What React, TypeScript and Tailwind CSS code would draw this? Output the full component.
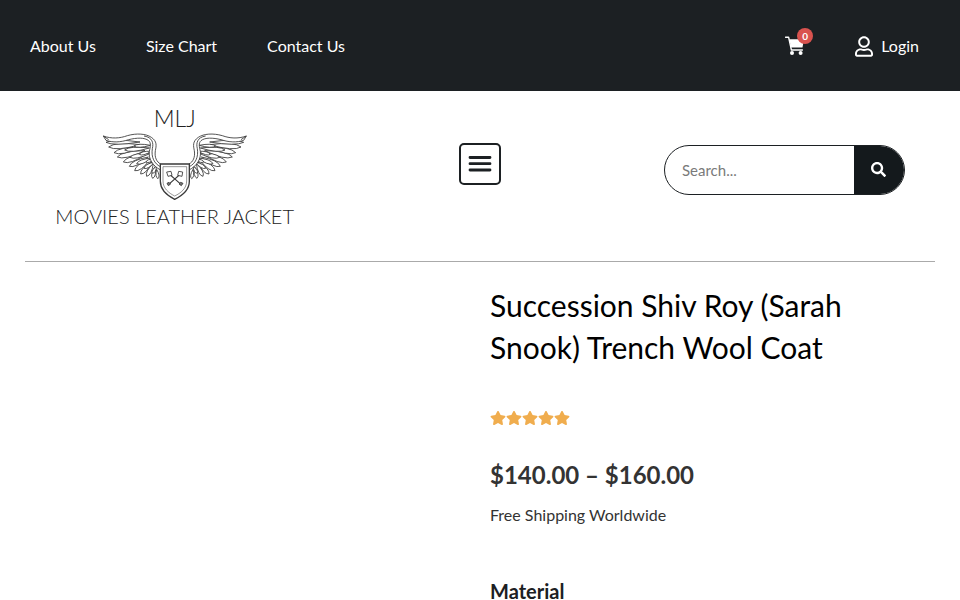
import { FaRegUser, FaSearch, FaStar } from "react-icons/fa";

const links = ["About Us", "Size Chart", "Contact Us"];

// root x, root y, tip x, tip y, half width
const feathers = [
  // long outer row
  [350, 222, 354, 250, 9],
  [345, 214, 338, 249, 11],
  [340, 205, 320, 243, 12],
  [335, 200, 302, 236, 13],
  [330, 193, 284, 226, 14],
  [325, 185, 268, 213, 14],
  [320, 176, 250, 200, 15],
  [315, 166, 232, 185, 15],
  [305, 156, 222, 172, 15],
  [300, 148, 206, 155, 15],
  [300, 140, 198, 141, 12],
  // middle row
  [350, 212, 337, 234, 9],
  [344, 200, 312, 219, 10],
  [337, 188, 290, 205, 11],
  [332, 174, 270, 186, 12],
  [328, 158, 254, 164, 12],
  // short row by the band
  [342, 192, 318, 200, 8],
  [334, 168, 298, 177, 9],
  [332, 150, 282, 152, 9],
];

function featherPath([rx, ry, tx, ty, w]: number[]) {
  const len = Math.hypot(tx - rx, ty - ry);
  const nx = (-(ty - ry) / len) * w;
  const ny = ((tx - rx) / len) * w;
  const ax = rx + (tx - rx) * 0.78;
  const ay = ry + (ty - ry) * 0.78;
  return `M${rx} ${ry}Q${ax + nx} ${ay + ny} ${tx} ${ty}Q${ax - nx} ${ay - ny} ${rx} ${ry}`;
}

function Wing() {
  return (
    <g strokeLinejoin="round">
      {feathers.map((f) => (
        <path key={f.join()} d={featherPath(f)} fill="white" />
      ))}
      {/* leading edge and the band under it */}
      <path
        fill="white"
        d="M190 122C215 131 240 129 262 121C290 113 318 115 334 126C352 138 349 152 346 166C343 186 350 200 362 206V224C338 212 325 190 328 168C331 155 334 143 326 136C314 126 290 127 266 133C242 141 218 142 198 135Z"
      />
      <path d="M312 122C338 126 341 144 337 160C333 186 343 205 361 214M190 122L206 133" />
    </g>
  );
}

function Crest() {
  return (
    <svg width="144" height="67" viewBox="189 113 432 201" fill="none" stroke="#3a3a3a" strokeWidth="2.6" aria-hidden="true">
      <Wing />
      <g transform="translate(809 0) scale(-1 1)">
        <Wing />
      </g>
      <path d="M361 206H448V258C448 284 427 301 404 312C382 301 361 284 361 258Z" fill="white" strokeWidth="4" />
      <path d="M369 214H440V257C440 279 423 293 404 302C386 293 369 279 369 257Z" strokeWidth="1.6" />
      {/* crossed keys */}
      <path d="M391 239L423 267M418 239L386 267" strokeWidth="3.2" />
      <path d="M380 230L393 228L396 240L384 243ZM416 228L428 230L426 243L413 240Z" fill="white" />
      <path d="M381 264L387 261L392 266L385 271ZM422 261L429 264L424 271L417 266Z" fill="#777" />
    </svg>
  );
}

function CartIcon() {
  return (
    <svg width="20" height="20" viewBox="0 0 20 20" fill="none" aria-hidden="true">
      <path d="M0.5 1.2H3.6L6.4 14H17.4" stroke="white" strokeWidth="1.4" strokeLinejoin="round" strokeLinecap="round" />
      <path d="M4.3 3.2H19L17.5 11.6H6.2Z" fill="white" />
      <circle cx="7" cy="17" r="2" fill="white" />
      <circle cx="15.6" cy="17" r="2" fill="white" />
    </svg>
  );
}

export default function App() {
  return (
    <div className="bg-white font-['Lato',sans-serif] text-base text-[#333]">
      <header className="flex h-[91px] items-center justify-between bg-[#1c2023] pt-px pr-[41px] pl-[30px] text-white">
        <nav className="flex gap-[50px]">
          {links.map((label) => (
            <a key={label} href="#">
              {label}
            </a>
          ))}
        </nav>
        <div className="flex items-center gap-[50px]">
          <button className="relative" aria-label="Cart">
            <CartIcon />
            <span className="absolute -top-2 -right-2 flex size-4 items-center justify-center rounded-full bg-[#d9534f] text-[10px] leading-4 font-bold">
              0
            </span>
          </button>
          <a href="#" className="flex items-center gap-2">
            <FaRegUser className="h-[21px] w-[18px]" />
            Login
          </a>
        </div>
      </header>

      <div className="mx-[25px] grid h-[171px] grid-cols-3 border-b border-[#aaa]">
        <a href="#" className="flex flex-col items-center pt-[15px] pr-1 font-light whitespace-nowrap text-[#222]">
          <span className="text-[23px] leading-6">MLJ</span>
          <span className="mt-[3px]">
            <Crest />
          </span>
          <span className="mt-1 text-xl leading-6">MOVIES LEATHER JACKET</span>
        </a>
        <div className="flex justify-center pt-[52px]">
          <button
            aria-label="Menu"
            className="flex size-[42px] items-center justify-center rounded-[5px] border-2 border-[#1c2023]"
          >
            <svg width="24" height="18" viewBox="0 0 24 18" stroke="#1c2023" strokeWidth="2.8" strokeLinecap="round">
              <path d="M2 2.5H22M2 8.7H22M2 15H22" />
            </svg>
          </button>
        </div>
        <div className="flex justify-end pt-[54px] pr-[30px]">
          <form className="flex h-[50px] w-[241px] overflow-hidden rounded-full border border-[#1c2023]">
            <input
              type="search"
              aria-label="Search"
              placeholder="Search..."
              className="min-w-0 flex-1 pl-[17px] text-[15px] outline-none placeholder:text-[#7a7a7a]"
            />
            <button type="button" aria-label="Search" className="flex w-[50px] items-center justify-center bg-[#14191c] pr-0.5 pb-px text-white">
              <FaSearch className="size-[15px]" />
            </button>
          </form>
        </div>
      </div>

      <main className="grid grid-cols-2 px-[25px]">
        <div />
        <section className="px-[10px] pt-[22px]">
          <h1 className="text-[30px] leading-[42px] text-black">Succession Shiv Roy (Sarah Snook) Trench Wool Coat</h1>
          <div className="mt-[42px] flex text-[#f0ad4e]" role="img" aria-label="5 out of 5">
            {[1, 2, 3, 4, 5].map((n) => (
              <FaStar key={n} className="size-4" />
            ))}
          </div>
          <p className="mt-[33px] text-2xl leading-8 font-bold">$140.00 – $160.00</p>
          <p className="mt-3 leading-6">Free Shipping Worldwide</p>
          <h2 className="mt-[54px] text-xl leading-5 font-bold text-[#1c2023]">Material</h2>
        </section>
      </main>
    </div>
  );
}
